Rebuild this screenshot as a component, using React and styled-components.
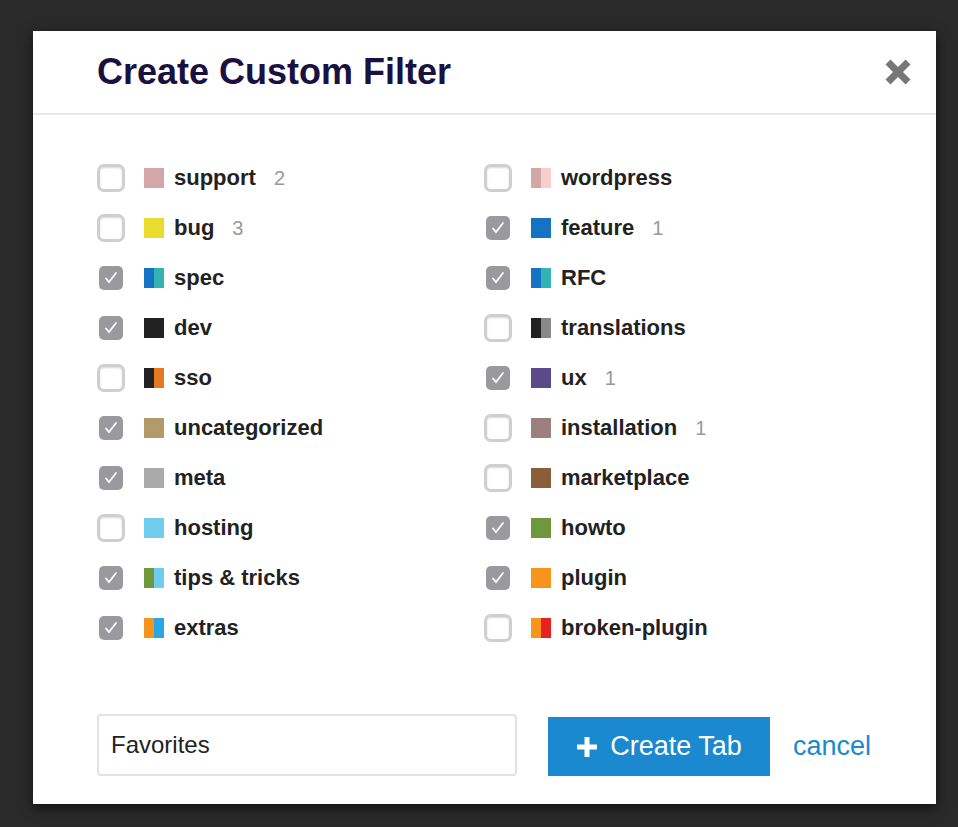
import React from "react";
import styled, { createGlobalStyle } from "styled-components";

const Global = createGlobalStyle`
  html, body { margin: 0; padding: 0; background: #2a2a2a; }
  body { font-family: "Liberation Sans", Arial, sans-serif; }
`;

const Backdrop = styled.div`
  width: 958px;
  height: 827px;
  background: #2a2a2a;
  padding: 31px 0 0 33px;
  box-sizing: border-box;
  overflow: hidden;
`;

const Modal = styled.div`
  width: 903px;
  height: 773px;
  background: #fff;
  box-shadow: 0 4px 12px rgba(0, 0, 0, 0.6);
  display: flex;
  flex-direction: column;
`;

const Header = styled.div`
  height: 82px;
  border-bottom: 2px solid #e8e8e8;
  display: flex;
  align-items: center;
  justify-content: space-between;
  padding: 0 24px 0 64px;
`;

const Title = styled.h1`
  margin: 0;
  font-size: 36px;
  font-weight: bold;
  color: #1b1140;
`;

const Close = styled.button`
  border: 0;
  background: none;
  padding: 0;
  cursor: pointer;
  display: flex;
`;

const Grid = styled.div`
  display: grid;
  grid-template-columns: 387px 1fr;
  grid-auto-rows: 50px;
  padding: 38px 0 0 64px;
  flex: 1;
`;

const Row = styled.label`
  display: flex;
  align-items: center;
  height: 50px;
`;

const Box = styled.span`
  width: 28px;
  height: 28px;
  box-sizing: border-box;
  border-radius: 7px;
  display: flex;
  align-items: center;
  justify-content: center;
  margin-right: 19px;
  ${(p) =>
    p.checked
      ? `background: #9a9a9e; width: 24px; height: 24px; margin: 0 21px 0 2px; border-radius: 5px;`
      : `background: #fff; border: 3px solid #cfcfcf; box-shadow: inset 0 1px 2px rgba(0,0,0,0.15);`}
`;

const Swatch = styled.span`
  width: 20px;
  height: 20px;
  display: flex;
  margin-right: 10px;
  span { flex: 1; }
`;

const Name = styled.span`
  font-size: 22px;
  font-weight: bold;
  color: #222;
`;

const Count = styled.span`
  font-size: 20px;
  color: #999;
  margin-left: 18px;
`;

const Footer = styled.div`
  display: flex;
  align-items: center;
  padding: 0 0 28px 64px;
`;

const Input = styled.input`
  width: 420px;
  height: 62px;
  box-sizing: border-box;
  border: 2px solid #e2e2e2;
  border-radius: 4px;
  padding: 0 12px;
  font-family: "Liberation Sans", Arial, sans-serif;
  font-size: 24px;
  color: #222;
  outline: none;
`;

const Button = styled.button`
  margin-left: 31px;
  width: 222px;
  height: 59px;
  background: #1a89cf;
  border: 0;
  color: #fff;
  font-family: "Liberation Sans", Arial, sans-serif;
  font-size: 27px;
  display: flex;
  align-items: center;
  justify-content: center;
  gap: 12px;
  margin-top: 4px;
`;

const Cancel = styled.a`
  margin-left: 23px;
  margin-top: 4px;
  color: #1a89cf;
  font-size: 27px;
`;

const left = [
  ["support", ["#d3a7a7"], false, 2],
  ["bug", ["#e9dc2e"], false, 3],
  ["spec", ["#1473c3", "#33b3b1"], true],
  ["dev", ["#222"], true],
  ["sso", ["#222", "#e5791f"], false],
  ["uncategorized", ["#b39a6a"], true],
  ["meta", ["#aaa"], true],
  ["hosting", ["#71cdee"], false],
  ["tips & tricks", ["#6e983b", "#71cdee"], true],
  ["extras", ["#f7941d", "#29a6e6"], true],
];
const right = [
  ["wordpress", ["#d3a7a7", "#f8cdcd"], false],
  ["feature", ["#1473c3"], true, 1],
  ["RFC", ["#1473c3", "#33b3b1"], true],
  ["translations", ["#222", "#888"], false],
  ["ux", ["#5b4a8a"], true, 1],
  ["installation", ["#9c7f7f"], false, 1],
  ["marketplace", ["#8b5e3a"], false],
  ["howto", ["#6e983b"], true],
  ["plugin", ["#f7941d"], true],
  ["broken-plugin", ["#f7941d", "#e8201e"], false],
];

function Item({ item }) {
  const [name, colors, checked, count] = item;
  return (
    <Row>
      <Box checked={checked}>
        {checked && (
          <svg width="14" height="14" viewBox="0 0 14 14">
            <path d="M2 7.5l3 3.5 7-9" fill="none" stroke="#fff" strokeWidth="1.8" strokeLinecap="round" />
          </svg>
        )}
      </Box>
      <Swatch>
        {colors.map((c, i) => (
          <span key={i} style={{ background: c }} />
        ))}
      </Swatch>
      <Name>{name}</Name>
      {count && <Count>{count}</Count>}
    </Row>
  );
}

export default function App() {
  const cells = [];
  left.forEach((l, i) => {
    cells.push(<Item key={"l" + i} item={l} />);
    cells.push(<Item key={"r" + i} item={right[i]} />);
  });
  return (
    <>
      <Global />
      <Backdrop>
        <Modal>
          <Header>
            <Title>Create Custom Filter</Title>
            <Close>
              <svg width="28" height="28" viewBox="0 0 28 28">
                <path d="M4 4L24 24M24 4L4 24" stroke="#777" strokeWidth="7" />
              </svg>
            </Close>
          </Header>
          <Grid>{cells}</Grid>
          <Footer>
            <Input defaultValue="Favorites" />
            <Button>
              <svg width="22" height="22" viewBox="0 0 22 22">
                <path d="M11 1v20M1 11h20" stroke="#fff" strokeWidth="5" />
              </svg>
              Create Tab
            </Button>
            <Cancel>cancel</Cancel>
          </Footer>
        </Modal>
      </Backdrop>
    </>
  );
}
